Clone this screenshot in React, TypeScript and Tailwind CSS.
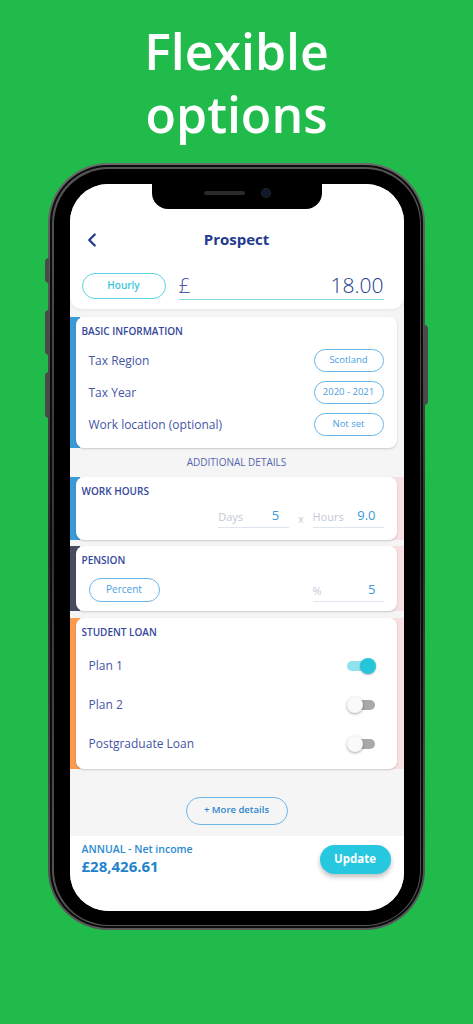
import { ChevronLeft } from "lucide-react";

const font = { fontFamily: '"Open Sans", "Noto Sans", sans-serif' };

function Pill({ label, className = "" }: { label: string; className?: string }) {
  return (
    <div
      className={`flex h-[23px] w-[70px] items-center justify-center rounded-full border border-[#6cb6ea] text-[9.5px] font-medium text-[#4a9ee0] ${className}`}
    >
      {label}
    </div>
  );
}

function Toggle({ on }: { on?: boolean }) {
  if (on) {
    return (
      <div className="relative flex h-[16px] w-[29px] items-center">
        <div className="h-[10px] w-[27px] rounded-full bg-[#90e2ee]" />
        <div className="absolute right-0 h-[16px] w-[16px] rounded-full bg-[#26c6da] shadow-[0_1px_2px_rgba(0,0,0,0.3)]" />
      </div>
    );
  }
  return (
    <div className="relative flex h-[16px] w-[29px] items-center">
      <div className="ml-[4px] h-[10px] w-[24px] rounded-full bg-[#a9a9a9]" />
      <div className="absolute left-0 h-[16px] w-[16px] rounded-full bg-[#fafafa] shadow-[0_1px_3px_rgba(0,0,0,0.35)]" />
    </div>
  );
}

function Card({
  accent,
  title,
  children,
}: {
  accent: string;
  title: string;
  children: React.ReactNode;
}) {
  return (
    <div className={`flex ${accent}`}>
      <div className="ml-[6px] mr-[7px] flex-1 rounded-lg bg-white shadow-[0_1px_2px_rgba(0,0,0,0.18)]">
        <div className="px-[6px] pt-[7px] text-[10px] font-semibold uppercase leading-[14px] text-[#34479b]">
          {title}
        </div>
        {children}
      </div>
    </div>
  );
}

export default function App() {
  return (
    <div className="min-h-[1024px] w-full overflow-hidden bg-[#20bb4b]" style={font}>
      <h1 className="pt-[20px] text-center text-[50px] font-semibold leading-[63px] text-white">
        Flexible
        <br />
        options
      </h1>

      {/* phone */}
      <div className="relative mx-auto mt-[17px] w-[377px]">
        {/* side buttons */}
        <div className="absolute -left-[3px] top-[95px] h-[25px] w-[4px] rounded-l bg-[#4a4a4a]" />
        <div className="absolute -left-[3px] top-[147px] h-[45px] w-[4px] rounded-l bg-[#4a4a4a]" />
        <div className="absolute -left-[3px] top-[209px] h-[46px] w-[4px] rounded-l bg-[#4a4a4a]" />
        <div className="absolute -right-[3px] top-[162px] h-[80px] w-[4px] rounded-r bg-[#4a4a4a]" />

        <div className="rounded-[60px] bg-gradient-to-b from-[#6a6a6a] via-[#2e2e2e] to-[#5a5a5a] p-[2px]">
          <div className="rounded-[58px] bg-[#0c0c0c] p-[2px]">
            <div className="rounded-[56px] bg-gradient-to-b from-[#555] via-[#333] to-[#555] p-[1.5px]">
              <div className="rounded-[55px] bg-black px-[16px] pb-[14px] pt-[15px]">
                {/* screen */}
                <div className="relative flex h-[727px] flex-col overflow-hidden rounded-[38px] bg-[#f5f5f5]">
                  {/* notch */}
                  <div className="absolute left-[82px] top-0 z-10 flex h-[25px] w-[170px] items-start justify-center rounded-b-[16px] bg-black">
                    <div className="mt-[7px] h-[4px] w-[41px] rounded-full bg-[#2a2a2a]" />
                    <div className="ml-[17px] mt-[5px] h-[8px] w-[8px] rounded-full bg-[#101a2e] ring-1 ring-[#222]" />
                  </div>

                  {/* header */}
                  <div className="h-[125px] rounded-b-xl bg-white pl-[12px] pr-[20px] pt-[44px] shadow-[0_1px_3px_rgba(0,0,0,0.08)]">
                    <div className="relative flex h-[24px] items-center">
                      <ChevronLeft className="-ml-[1px] h-[22px] w-[22px] text-[#233a8e]" strokeWidth={2.5} />
                      <div className="absolute inset-x-0 ml-[8px] text-center text-[15px] font-bold text-[#233a8e]">
                        Prospect
                      </div>
                    </div>
                    <div className="mt-[20px] flex items-center">
                      <div className="flex h-[26px] w-[84px] items-center justify-center rounded-full border border-[#5cd6e6] text-[10px] font-semibold text-[#3cc6dc]">
                        Hourly
                      </div>
                      <div className="ml-[13px] flex flex-1 items-end justify-between border-b border-[#7fdbe8] pb-[1px]">
                        <span className="text-[21px] font-light leading-[26px] text-[#4b5aa6]">£</span>
                        <span className="text-[21px] font-light leading-[26px] text-[#233a8e]">18.00</span>
                      </div>
                    </div>
                  </div>

                  {/* basic information */}
                  <div className="mt-[8px]">
                    <Card accent="bg-[linear-gradient(90deg,#3a9ad6_10px,transparent_10px)]" title="Basic Information">
                      <div className="px-[13px] pb-[7px] pt-[7px]">
                        {[
                          ["Tax Region", "Scotland"],
                          ["Tax Year", "2020 - 2021"],
                          ["Work location (optional)", "Not set"],
                        ].map(([l, v]) => (
                          <div key={l} className="flex h-[32px] items-center justify-between">
                            <span className="text-[12px] text-[#4556a5]">{l}</span>
                            <Pill label={v} />
                          </div>
                        ))}
                      </div>
                    </Card>
                  </div>

                  <div className="flex h-[29px] items-center justify-center text-[10px] text-[#5566ad]">
                    ADDITIONAL DETAILS
                  </div>

                  {/* work hours */}
                  <Card accent="bg-[linear-gradient(90deg,#3a9ad6_10px,#f8dfe1_10px)]" title="Work Hours">
                    <div className="flex h-[42px] items-end justify-end pb-[12px] pr-[13px]">
                      <div className="flex w-[71px] items-end justify-between border-b border-[#dde6ee] pb-[1px]">
                        <span className="text-[11px] text-[#c3c7d6]">Days</span>
                        <span className="mr-[10px] text-[13px] text-[#3a9ad9]">5</span>
                      </div>
                      <span className="mx-[9px] pb-[1px] text-[10px] text-[#c3c7d6]">x</span>
                      <div className="flex w-[71px] items-end justify-between border-b border-[#dde6ee] pb-[1px]">
                        <span className="text-[11px] text-[#c3c7d6]">Hours</span>
                        <span className="mr-[8px] text-[13px] text-[#3a9ad9]">9.0</span>
                      </div>
                    </div>
                  </Card>

                  {/* pension */}
                  <div className="mt-[6px]">
                    <Card accent="bg-[linear-gradient(90deg,#474d5e_10px,#f8dfe1_10px)]" title="Pension">
                      <div className="flex h-[44px] items-center justify-between px-[13px] pb-[9px] pt-[11px]">
                        <Pill label="Percent" className="h-[24px] w-[71px] text-[10px]" />
                        <div className="mt-[3px] flex w-[71px] items-end justify-between border-b border-[#dde6ee] pb-[1px]">
                          <span className="text-[11px] text-[#c3c7d6]">%</span>
                          <span className="mr-[8px] text-[13px] text-[#3a9ad9]">5</span>
                        </div>
                      </div>
                    </Card>
                  </div>

                  {/* student loan */}
                  <div className="mt-[7px]">
                    <Card accent="bg-[linear-gradient(90deg,#fc9a4e_10px,#f8dfe1_10px)]" title="Student Loan">
                      <div className="pb-[5px] pl-[13px] pr-[21px] pt-[8px]">
                        {[
                          ["Plan 1", true],
                          ["Plan 2", false],
                          ["Postgraduate Loan", false],
                        ].map(([l, on]) => (
                          <div key={l as string} className="flex h-[39px] items-center justify-between">
                            <span className="text-[12px] text-[#4556a5]">{l as string}</span>
                            <Toggle on={on as boolean} />
                          </div>
                        ))}
                      </div>
                    </Card>
                  </div>

                  <div className="flex flex-1 justify-center pt-[28px]">
                    <div className="flex h-[28px] w-[102px] items-center justify-center rounded-full border border-[#6cb6ea] text-[9.5px] font-semibold text-[#2f86cf]">
                      + More details
                    </div>
                  </div>

                  {/* footer */}
                  <div className="flex h-[75px] shrink-0 items-start justify-between bg-white pl-[12px] pr-[13px] pt-[6px]">
                    <div>
                      <div className="text-[10.5px] font-semibold leading-[14px] text-[#2a8ad2]">
                        ANNUAL - Net income
                      </div>
                      <div className="text-[15px] font-bold leading-[20px] text-[#1f84cc]">
                        £28,426.61
                      </div>
                    </div>
                    <div className="mt-[3px] flex h-[29px] w-[71px] items-center justify-center rounded-full bg-[#26c8df] text-[11.5px] font-bold text-white shadow-[0_3px_5px_rgba(0,0,0,0.25)]">
                      Update
                    </div>
                  </div>
                </div>
              </div>
            </div>
          </div>
        </div>
      </div>
    </div>
  );
}
